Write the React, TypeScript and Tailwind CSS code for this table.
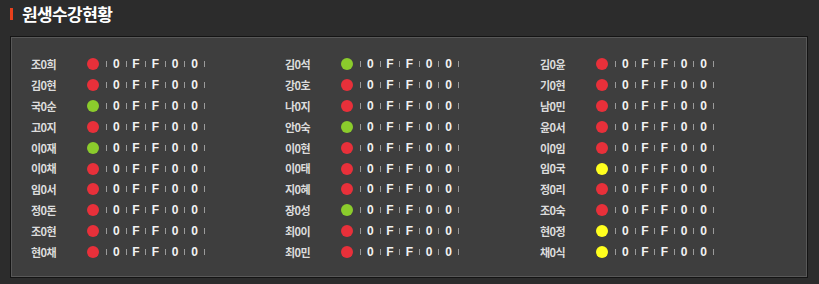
type Status = "red" | "green" | "yellow";

const DOT: Record<Status, string> = {
  red: "bg-[#e8303a]",
  green: "bg-[#8bcc2c]",
  yellow: "bg-[#ffff1e]",
};

const COLUMNS: [string, Status][][] = [
  [
    ["조0희", "red"],
    ["김0현", "red"],
    ["국0순", "green"],
    ["고0지", "red"],
    ["이0재", "green"],
    ["이0채", "red"],
    ["임0서", "red"],
    ["정0돈", "red"],
    ["조0현", "red"],
    ["현0채", "red"],
  ],
  [
    ["김0석", "green"],
    ["강0호", "red"],
    ["나0지", "red"],
    ["안0숙", "green"],
    ["이0현", "red"],
    ["이0태", "red"],
    ["지0혜", "red"],
    ["장0성", "green"],
    ["최0이", "red"],
    ["최0민", "red"],
  ],
  [
    ["김0윤", "red"],
    ["기0현", "red"],
    ["남0민", "red"],
    ["윤0서", "red"],
    ["이0임", "red"],
    ["임0국", "yellow"],
    ["정0리", "red"],
    ["조0숙", "red"],
    ["현0정", "yellow"],
    ["채0식", "yellow"],
  ],
];

const VALUES = ["0", "F", "F", "0", "0"];

function Bar() {
  return <span className="inline-block h-[6px] w-px bg-[#9a9a9a]" />;
}

function Row({ name, status }: { name: string; status: Status }) {
  return (
    <div className="flex h-[20.85px] items-center">
      <span className="w-[56px] text-[11px] font-bold tracking-[-0.5px] text-[#dcdcdc] [font-family:'Noto_Sans_CJK_KR',sans-serif]">
        {name}
      </span>
      <span className={`h-[12px] w-[12px] rounded-full ${DOT[status]}`} />
      <div className="ml-[7px] flex items-center">
        {VALUES.map((v, i) => (
          <div key={i} className="flex items-center">
            <Bar />
            <span className="w-[18.6px] text-center text-[12px] font-bold text-[#f2f2f2] [font-family:'Liberation_Sans',sans-serif]">
              {v}
            </span>
          </div>
        ))}
        <Bar />
      </div>
    </div>
  );
}

export default function App() {
  return (
    <div className="h-[284px] w-[819px] bg-[#2c2c2c] [font-family:'Noto_Sans_CJK_KR',sans-serif]">
      {/* 제목 */}
      <div className="flex h-[28px] items-center pl-[10px]">
        <span className="h-[12px] w-[3px] bg-[#e8401c]" />
        <span className="ml-[9px] text-[17px] font-bold tracking-[-0.6px] text-white">원생수강현황</span>
      </div>

      {/* 목록 */}
      <div className="mx-[10px] mt-[8px] h-[242px] w-[798px] border border-[#141414] bg-[#3e3e3e] shadow-[inset_0_0_0_1px_#585858]">
        <div className="grid grid-cols-[254px_255px_1fr] pl-[20px] pt-[17px]">
          {COLUMNS.map((col, ci) => (
            <div key={ci}>
              {col.map(([name, status]) => (
                <Row key={name} name={name} status={status} />
              ))}
            </div>
          ))}
        </div>
      </div>
    </div>
  );
}
